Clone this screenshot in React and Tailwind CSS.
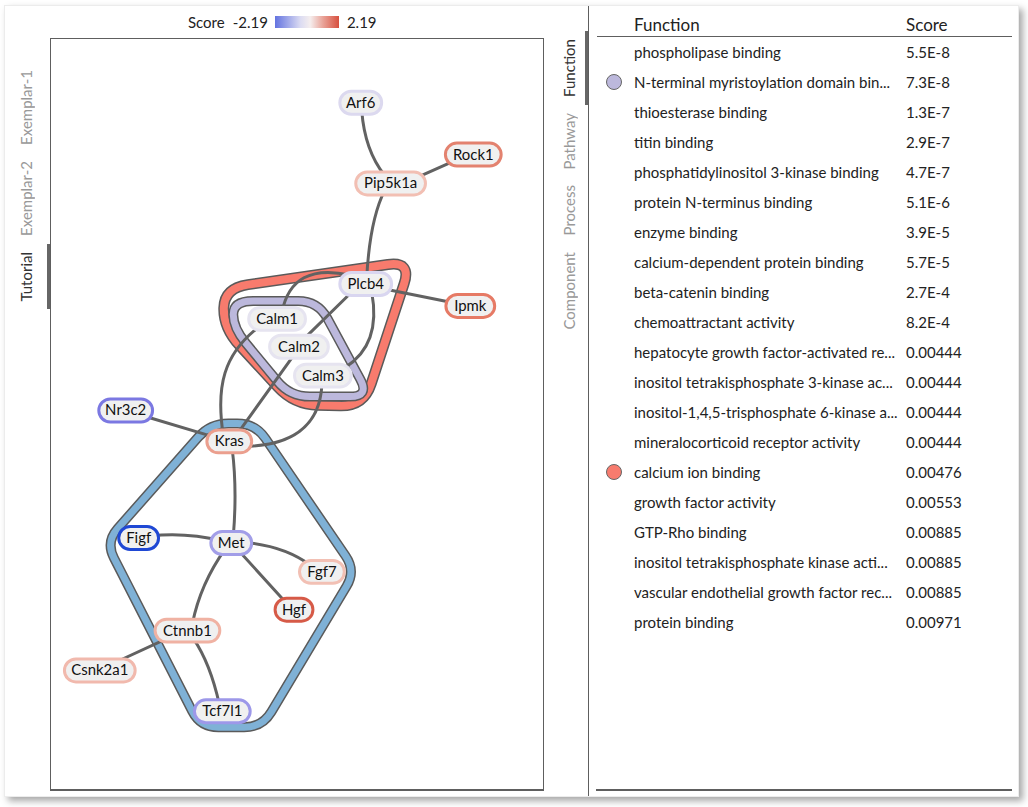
import React from "react";

const font = { fontFamily: "Lato, 'Noto Sans', sans-serif" };

const rows = [
  ["phospholipase binding", "5.5E-8"],
  ["N-terminal myristoylation domain bin...", "7.3E-8", "#bcb8dc"],
  ["thioesterase binding", "1.3E-7"],
  ["titin binding", "2.9E-7"],
  ["phosphatidylinositol 3-kinase binding", "4.7E-7"],
  ["protein N-terminus binding", "5.1E-6"],
  ["enzyme binding", "3.9E-5"],
  ["calcium-dependent protein binding", "5.7E-5"],
  ["beta-catenin binding", "2.7E-4"],
  ["chemoattractant activity", "8.2E-4"],
  ["hepatocyte growth factor-activated re...", "0.00444"],
  ["inositol tetrakisphosphate 3-kinase ac...", "0.00444"],
  ["inositol-1,4,5-trisphosphate 6-kinase a...", "0.00444"],
  ["mineralocorticoid receptor activity", "0.00444"],
  ["calcium ion binding", "0.00476", "#f77b6e"],
  ["growth factor activity", "0.00553"],
  ["GTP-Rho binding", "0.00885"],
  ["inositol tetrakisphosphate kinase acti...", "0.00885"],
  ["vascular endothelial growth factor rec...", "0.00885"],
  ["protein binding", "0.00971"],
];

// graph nodes in page coordinates: x, y, width, label, stroke
const nodes = [
  [361, 102, 42, "Arf6", "#dcd9ef"],
  [391, 183, 70, "Pip5k1a", "#f2bfb3"],
  [474, 154, 56, "Rock1", "#e3826f"],
  [366, 284, 52, "Plcb4", "#d9d6f0"],
  [471, 306, 49, "Ipmk", "#e67a65"],
  [277, 319, 57, "Calm1", "#e6e4f0"],
  [299, 347, 59, "Calm2", "#e6e4f0"],
  [323, 376, 57, "Calm3", "#e6e4f0"],
  [125, 411, 54, "Nr3c2", "#7b78e2"],
  [229, 442, 45, "Kras", "#eb9f8e"],
  [138, 539, 40, "Figf", "#1f48d4"],
  [231, 544, 41, "Met", "#a29ee8"],
  [322, 573, 45, "Fgf7", "#f2c0b4"],
  [294, 611, 38, "Hgf", "#d65a47"],
  [187, 632, 65, "Ctnnb1", "#f0b2a3"],
  [99, 672, 71, "Csnk2a1", "#f1b9ad"],
  [222, 713, 56, "Tcf7l1", "#9d98e9"],
];

const edges = [
  "M362,110 Q365,150 385,175",
  "M460,158 L420,176",
  "M385,190 Q370,220 367,278",
  "M380,288 L460,304",
  "M350,275 Q292,262 282,312",
  "M352,292 L305,338",
  "M372,292 Q382,345 345,368",
  "M255,330 C225,355 215,385 223,436",
  "M292,358 L236,436",
  "M322,385 C320,428 290,446 245,447",
  "M145,417 L215,438",
  "M232,450 Q237,490 233,538",
  "M222,542 Q185,533 150,537",
  "M240,543 Q283,546 310,566",
  "M237,550 L286,604",
  "M225,550 Q200,585 192,625",
  "M175,636 L110,666",
  "M193,640 Q210,665 219,706",
];

function toward(a, b, r) {
  const dx = b[0] - a[0];
  const dy = b[1] - a[1];
  const len = Math.hypot(dx, dy);
  const t = Math.min(r, len / 2) / len;
  return [a[0] + dx * t, a[1] + dy * t];
}

function rounded(pts, r) {
  let d = "";
  const n = pts.length;
  for (let i = 0; i < n; i++) {
    const p0 = pts[(i - 1 + n) % n];
    const p1 = pts[i];
    const p2 = pts[(i + 1) % n];
    const a = toward(p1, p0, r);
    const b = toward(p1, p2, r);
    d += `${i === 0 ? "M" : "L"}${a[0]},${a[1]} Q${p1[0]},${p1[1]} ${b[0]},${b[1]} `;
  }
  return d + "Z";
}

const hulls = [
  [[[224, 288], [412, 261], [364, 407], [294, 405], [223, 328]], 24, "#f87b6d", 11, 8],
  [[[233, 301], [318, 301], [370, 397], [290, 397], [233, 328]], 20, "#bcb8dc", 10, 7],
  [[[210, 424], [255, 424], [356, 572], [262, 729], [200, 729], [105, 543]], 18, "#7fb1d6", 10, 7],
];

function Graph() {
  return (
    <svg className="block w-full h-full" viewBox="50 38 494 753" style={font}>
      {hulls.map(([pts, r, c, w1, w2], i) => {
        const d = rounded(pts, r);
        return (
          <g key={i} fill="none" strokeLinejoin="round">
            <path d={d} stroke="#5a5a5a" strokeWidth={w1} />
            <path d={d} stroke={c} strokeWidth={w2} />
          </g>
        );
      })}
      {edges.map((d, i) => (
        <path key={i} d={d} fill="none" stroke="#626262" strokeWidth="3" strokeLinecap="round" />
      ))}
      {nodes.map(([x, y, w, label, c]) => (
        <g key={label}>
          <rect x={x - w / 2} y={y - 11.5} width={w} height="23" rx="11.5" fill="#f0f0f0" stroke={c} strokeWidth="3" />
          <text x={x} y={y + 5} textAnchor="middle" fontSize="15" fill="#111">{label}</text>
        </g>
      ))}
    </svg>
  );
}

function Tab({ label, active }) {
  return (
    <div className={`flex justify-center py-[8px] ${active ? "border-r-[3px] border-[#666] text-[#333]" : "border-r-[3px] border-transparent text-[#999]"}`}>
      <span className="[writing-mode:vertical-rl] rotate-180 text-[15px] leading-none">{label}</span>
    </div>
  );
}

export default function App() {
  return (
    <div className="w-[1028px] h-[807px] bg-white pt-[5px] pl-[4px]" style={font}>
      <div className="flex w-[1015px] h-[792px] bg-white border border-[#ececec] shadow-[4px_4px_7px_rgba(0,0,0,0.35)]">
        {/* left tabs */}
        <div className="w-[45px] flex flex-col pt-[56px]">
          <Tab label="Exemplar-1" />
          <Tab label="Exemplar-2" />
          <Tab label="Tutorial" active />
        </div>

        {/* graph */}
        <div className="w-[494px] flex flex-col">
          <div className="h-[32px] flex items-center pl-[138px] text-[15px] text-[#222]">
            <span>Score</span>
            <span className="ml-[8px]">-2.19</span>
            <span className="ml-[7px] w-[64px] h-[12px] bg-[linear-gradient(to_right,#6373e0,#dcdcf2_40%,#f5eeee_55%,#e9a398_75%,#d7503f)]"></span>
            <span className="ml-[8px]">2.19</span>
          </div>
          <div className="flex-1 mb-[5px] border border-b-2 border-[#5e5e5e]">
            <Graph />
          </div>
        </div>

        {/* right tabs */}
        <div className="w-[44px] flex flex-col pl-[10px] pt-[25px]">
          <Tab label="Function" active />
          <Tab label="Pathway" />
          <Tab label="Process" />
          <Tab label="Component" />
        </div>

        {/* function table */}
        <div className="flex-1 flex flex-col border-l border-[#5e5e5e]">
          <div className="ml-[8px] mr-[6px] flex flex-col flex-1">
            <div className="h-[31px] flex items-center pt-[8px] border-b border-[#5e5e5e] text-[17px] text-[#222]">
              <div className="w-[37px]"></div>
              <div className="w-[272px]">Function</div>
              <div>Score</div>
            </div>
            {rows.map(([name, score, dot]) => (
              <div key={name} className="h-[30px] flex items-center text-[15px] text-[#222]">
                <div className="w-[34px] flex justify-center">
                  {dot && <span className="w-[16px] h-[16px] rounded-full border border-[#666]" style={{ background: dot }}></span>}
                </div>
                <div className="w-[275px] pl-[3px] whitespace-nowrap">{name}</div>
                <div>{score}</div>
              </div>
            ))}
            <div className="mt-auto mb-[5px] -ml-px border-b-2 border-[#5e5e5e]"></div>
          </div>
        </div>
      </div>
    </div>
  );
}
